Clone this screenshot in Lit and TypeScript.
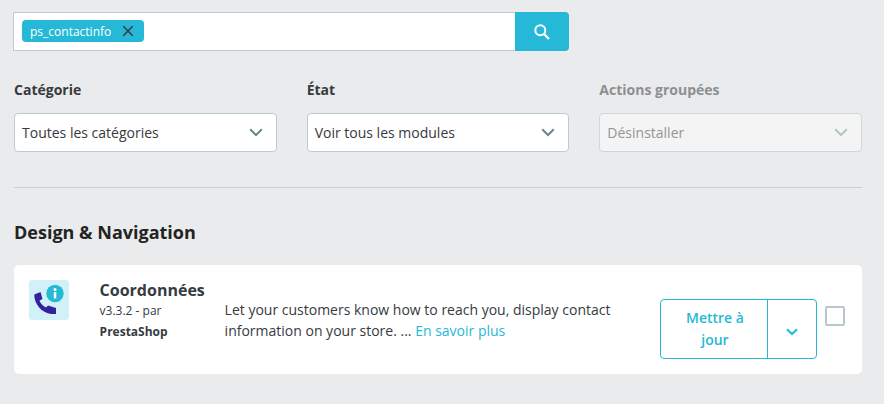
import { LitElement, html, css } from "lit";
import { customElement } from "lit/decorators.js";

const chevron = html`<svg class="chev" width="14" height="9" viewBox="0 0 14 9"><path d="M1.200 1.300 7 7l5.800-5.700" fill="none" stroke="currentColor" stroke-width="2"/></svg>`;
const smallChevron = html`<svg class="chev" width="12" height="8" viewBox="0 0 12 8"><path d="M1 1.200 6 6l5-4.800" fill="none" stroke="currentColor" stroke-width="2.200"/></svg>`;

@customElement("app-root")
export class AppRoot extends LitElement {
  static styles = css`
    :host { display: block; width: 884px; height: 404px; background: #eaebec; font-family: "Open Sans", sans-serif; color: #363a41; overflow: hidden; }
    * { box-sizing: border-box; }
    .page { padding: 12px 22px 0 14px; }
    .search { display: flex; height: 39px; width: 556px; margin-left: -1px; }
    .tagbox { flex: 1; background: #fff; border: 1px solid #bbcdd2; border-right: 0; padding: 7px 8px; display: flex; align-items: flex-start; }
    .tag { display: flex; align-items: center; height: 22px; background: #25b9d7; border-radius: 4px; color: #fff; font-size: 12px; padding: 0 10px 0 8px; gap: 11px; }
    .tag svg { display: block; }
    .sbtn { width: 54px; background: #25b9d7; border-radius: 0 4px 4px 0; display: flex; align-items: center; justify-content: center; }
    .filters { display: grid; grid-template-columns: repeat(3, 1fr); column-gap: 30px; margin-top: 29px; }
    .lab { font-size: 14px; font-weight: 700; line-height: 20px; height: 20px; margin-bottom: 13px; color: #363a41; }
    .sel { height: 39px; background: #fff; border: 1px solid #bbcdd2; border-radius: 4px; display: flex; align-items: center; justify-content: space-between; padding: 0 13px 0 7px; font-size: 14px; color: #363a41; }
    .chev { color: #6c868e; display: block; }
    .off .lab { color: #8d8f92; }
    .off .sel { background: #f4f4f5; border-color: #ced8dc; color: #939597; }
    .off .chev { color: #b4c4c9; }
    hr { border: 0; height: 1px; background: #c8d0d3; margin: 35px 0 0; }
    h2 { margin: 31px 0 0; font-size: 18px; font-weight: 700; line-height: 27px; color: #232323; }
    .card { margin-top: 19px; height: 109px; background: #fff; border-radius: 5px; display: flex; padding: 15px 16px 0 15px; }
    .ico { width: 40px; height: 40px; flex: none; }
    .who { margin-left: 30.6px; width: 125px; flex: none; }
    .name { font-size: 16px; font-weight: 700; line-height: 20px; color: #363a41; }
    .ver { font-size: 12px; line-height: 21px; }
    .by { font-size: 12px; font-weight: 700; line-height: 21px; }
    .desc { width: 435.4px; flex: none; font-size: 14px; line-height: 21px; margin-top: 19px; color: #363a41; }
    .desc span { color: #25b9d7; }
    .act { display: flex; height: 60px; width: 157px; flex: none; margin-top: 19px; border: 1px solid #25b9d7; border-radius: 4px; color: #25b9d7; }
    .main { width: 107px; border-right: 1px solid #25b9d7; display: flex; align-items: center; justify-content: center; text-align: center; font-size: 14px; font-weight: 600; line-height: 22px; padding: 0 19px 0 21px; }
    .drop { flex: 1; display: flex; align-items: center; justify-content: center; padding-top: 5px; }
    .drop .chev { color: #25b9d7; }
    .check { width: 20px; height: 20px; flex: none; border: 2px solid #b7c8cd; border-radius: 2px; margin: 26px 0 0 8px; }
  `;

  render() {
    return html`<div class="page">
      <div class="search">
        <div class="tagbox">
          <div class="tag">ps_contactinfo
            <svg width="12" height="12" viewBox="0 0 12 12"><path d="M1.300 1.300l9.400 9.400M10.700 1.300l-9.400 9.400" stroke="#363a41" stroke-width="1.500" fill="none"/></svg>
          </div>
        </div>
        <div class="sbtn">
          <svg width="18" height="18" viewBox="0 0 18 18"><circle cx="7.300" cy="7.300" r="5" fill="none" stroke="#fff" stroke-width="2"/><path d="M11 11l5 5" stroke="#fff" stroke-width="2.400" fill="none"/></svg>
        </div>
      </div>
      <div class="filters">
        <div><div class="lab">Catégorie</div><div class="sel">Toutes les catégories ${chevron}</div></div>
        <div><div class="lab">État</div><div class="sel">Voir tous les modules ${chevron}</div></div>
        <div class="off"><div class="lab">Actions groupées</div><div class="sel">Désinstaller ${chevron}</div></div>
      </div>
      <hr />
      <h2>Design &amp; Navigation</h2>
      <div class="card">
        <svg class="ico" viewBox="0 0 40 40">
          <rect width="40" height="40" rx="3" fill="#d2f0f7"/>
          <path d="M5.300 14.500 11.500 12l2 7-3 1.500c1 3 3.500 5.500 6.500 7l2-2 8 2.500v6h-5C13 33 5 24 5.300 14.500z" fill="#34219e"/>
          <circle cx="26" cy="13.500" r="8.700" fill="#25b9d7"/>
          <rect x="24.800" y="12" width="2.500" height="6.500" fill="#fff"/>
          <circle cx="26" cy="9.500" r="1.500" fill="#fff"/>
        </svg>
        <div class="who">
          <div class="name">Coordonnées</div>
          <div class="ver">v3.3.2 - par</div>
          <div class="by">PrestaShop</div>
        </div>
        <div class="desc">Let your customers know how to reach you, display contact information on your store. ... <span>En savoir plus</span></div>
        <div class="act">
          <div class="main">Mettre à jour</div>
          <div class="drop">${smallChevron}</div>
        </div>
        <div class="check"></div>
      </div>
    </div>`;
  }
}
